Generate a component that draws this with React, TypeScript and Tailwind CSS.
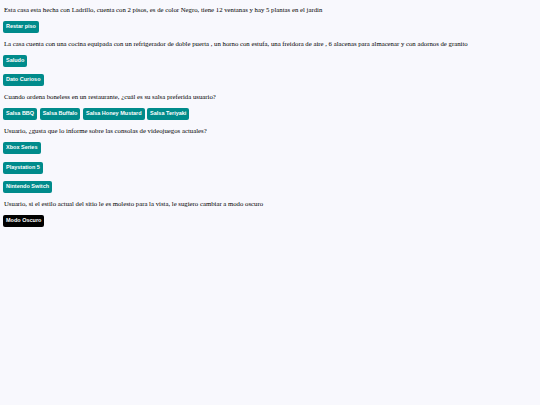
const serif = { fontFamily: '"Liberation Serif", "Times New Roman", serif' };

function Btn({ children, dark = false }: { children: React.ReactNode; dark?: boolean }) {
  return (
    <button
      className={`flex h-[12px] items-center rounded-[2px] px-[3px] text-[5.5px] font-bold leading-none text-white font-['Liberation_Sans',Arial,sans-serif] ${
        dark ? 'bg-black' : 'bg-[#008b8b]'
      }`}
    >
      {children}
    </button>
  );
}

function Line({ children }: { children: React.ReactNode }) {
  return (
    <p className="pl-[1px] text-[6.75px] leading-[10px] whitespace-nowrap text-black" style={serif}>
      {children}
    </p>
  );
}

export default function App() {
  return (
    <main className="min-h-[405px] w-full bg-[#f8f8fd] px-[3px] pt-[4.5px]">
      <div className="flex flex-col items-start">
        <Line>
          Esta casa esta hecha con Ladrillo, cuenta con 2 pisos, es de color Negro, tiene 12 ventanas y hay 5 plantas en el jardin
        </Line>
        <div className="mt-[6px] flex">
          <Btn>Restar piso</Btn>
        </div>

        <div className="mt-[6px]">
          <Line>
            La casa cuenta con una cocina equipada con un refrigerador de doble puerta , un horno con estufa, una freidora de aire , 6 alacenas para almacenar y con adornos de granito
          </Line>
        </div>
        <div className="mt-[6px] flex">
          <Btn>Saludo</Btn>
        </div>
        <div className="mt-[7.5px] flex">
          <Btn>Dato Curioso</Btn>
        </div>

        <div className="mt-[6px]">
          <Line>Cuando ordena boneless en un restaurante, ¿cuál es su salsa preferida usuario?</Line>
        </div>
        <div className="mt-[6px] flex gap-[2.5px]">
          <Btn>Salsa BBQ</Btn>
          <Btn>Salsa Buffalo</Btn>
          <Btn>Salsa Honey Mustard</Btn>
          <Btn>Salsa Teriyaki</Btn>
        </div>

        <div className="mt-[6px]">
          <Line>Usuario, ¿gusta que lo informe sobre las consolas de videojuegos actuales?</Line>
        </div>
        <div className="mt-[6px] flex">
          <Btn>Xbox Series</Btn>
        </div>
        <div className="mt-[7.5px] flex">
          <Btn>Playstation 5</Btn>
        </div>
        <div className="mt-[7.5px] flex">
          <Btn>Nintendo Switch</Btn>
        </div>

        <div className="mt-[6px]">
          <Line>Usuario, si el estilo actual del sitio le es molesto para la vista, le sugiero cambiar a modo oscuro</Line>
        </div>
        <div className="mt-[6px] flex">
          <Btn dark>Modo Oscuro</Btn>
        </div>
      </div>
    </main>
  );
}
